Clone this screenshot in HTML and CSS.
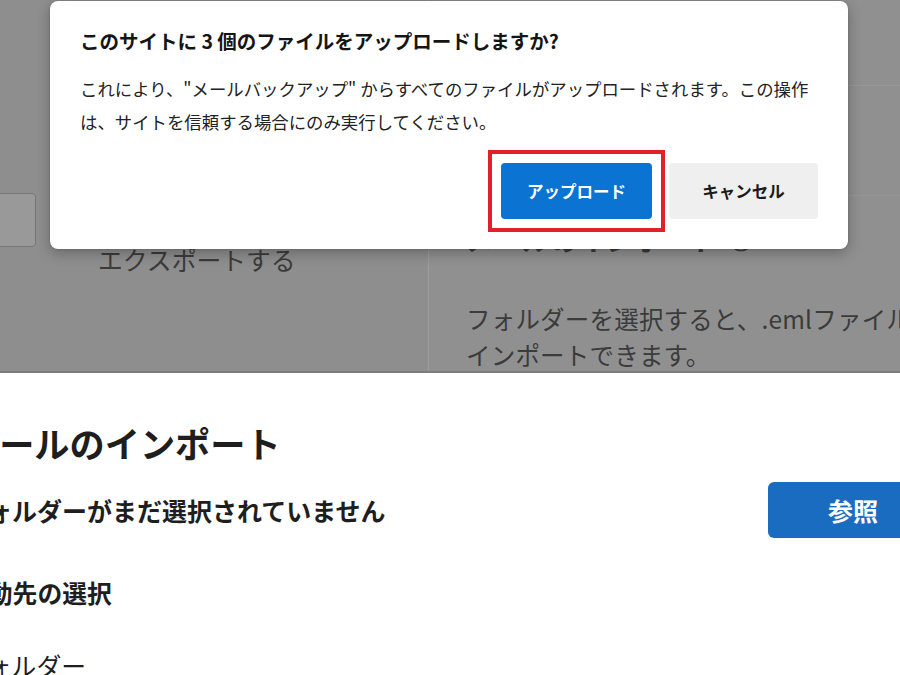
FILE: index.html
```html
<!DOCTYPE html>
<html lang="ja">
<head>
<meta charset="utf-8">
<title>アップロードの確認</title>
<link rel="stylesheet" href="styles.css">
</head>
<body>
<div class="screen">
  <section class="dim">
    <div class="bg-layout">
      <div class="bg-left">
        <div class="bg-input"></div>
        <div class="bg-export">エクスポートする</div>
      </div>
      <div class="bg-right">
        <div class="bg-row r1"></div>
        <div class="bg-row r2"></div>
        <div class="bg-heading">
          <span>メールのインポート</span>
          <svg class="info" width="26" height="26" viewBox="0 0 26 26"><circle cx="13" cy="13" r="11.5" fill="none" stroke="#3b3b3b" stroke-width="1.6"/><path d="M13 11v7" stroke="#3b3b3b" stroke-width="1.8"/><circle cx="13" cy="7.8" r="1.2" fill="#3b3b3b"/></svg>
        </div>
        <p class="bg-text">フォルダーを選択すると、.emlファイルを<br>インポートできます。</p>
      </div>
    </div>

    <div class="dialog" role="dialog">
      <h2 class="dialog-title">このサイトに 3 個のファイルをアップロードしますか?</h2>
      <p class="dialog-msg">これにより、"メールバックアップ" からすべてのファイルがアップロードされます。この操作<br>は、サイトを信頼する場合にのみ実行してください。</p>
      <div class="actions">
        <span class="highlight"><button class="btn btn-primary">アップロード</button></span>
        <button class="btn btn-secondary">キャンセル</button>
      </div>
    </div>
  </section>

  <section class="import">
    <div class="import-content">
      <h1 class="import-title">メールのインポート</h1>
      <div class="import-row">
        <p class="status">フォルダーがまだ選択されていません</p>
        <button class="browse">参照</button>
      </div>
      <h3 class="dest-title">移動先の選択</h3>
      <div class="folder-label">フォルダー</div>
    </div>
  </section>
</div>
</body>
</html>
```

FILE: styles.css
```css
* { box-sizing: border-box; }

html, body {
  margin: 0;
  padding: 0;
}

body {
  width: 900px;
  height: 675px;
  overflow: hidden;
  font-family: "Noto Sans CJK JP", "Noto Sans", sans-serif;
  background: #ffffff;
}

.screen {
  width: 900px;
  height: 675px;
  overflow: hidden;
}

/* ---------- dimmed page behind dialog ---------- */
.dim {
  position: relative;
  height: 373px;
  background: #8e8e8e;
  border-bottom: 2px solid #7c7c7c;
  overflow: hidden;
}

.bg-layout {
  display: grid;
  grid-template-columns: 428px 1fr;
  height: 100%;
}

.bg-left {
  padding-top: 193px;
}

.bg-input {
  margin-left: -100px;
  width: 136px;
  height: 54px;
  background: #999999;
  border: 1px solid #767676;
  border-radius: 4px;
}

.bg-export {
  margin-left: 98px;
  margin-top: -3px;
  font-size: 24.8px;
  line-height: 30px;
  color: #3b3b3b;
}

.bg-right {
  background: #909090;
  border-left: 1px solid #9c9c9c;
  padding-left: 37px;
}

.bg-row {
  margin-left: -37px;
  border-bottom: 1px solid #979797;
}

.bg-row.r1 { height: 86px; }
.bg-row.r2 { height: 110px; }

.bg-heading {
  display: flex;
  align-items: center;
  gap: 10px;
  margin-top: 25px;
  font-size: 28px;
  font-weight: 700;
  line-height: 36px;
  color: #3b3b3b;
}

.bg-text {
  margin: 44px 0 0;
  font-size: 24.5px;
  line-height: 36px;
  letter-spacing: 0.2px;
  color: #3b3b3b;
  white-space: nowrap;
}

/* ---------- dialog ---------- */
.dialog {
  position: absolute;
  top: 1px;
  left: 50px;
  width: 798px;
  padding: 27px 30px 17px;
  background: #ffffff;
  border-radius: 8px;
  box-shadow: 0 4px 14px rgba(0, 0, 0, 0.28), 0 0 2px rgba(0, 0, 0, 0.2);
}

.dialog-title {
  margin: 0;
  font-size: 19.5px;
  font-weight: 700;
  line-height: 26px;
  color: #151515;
}

.dialog-msg {
  margin: 18px 0 0;
  font-size: 17.4px;
  line-height: 33px;
  color: #222222;
  white-space: nowrap;
}

.actions {
  margin-top: 12px;
  display: flex;
  justify-content: flex-end;
  align-items: center;
  gap: 4px;
}

.highlight {
  display: flex;
  padding: 9px;
  border: 4px solid #e2202b;
}

.btn {
  height: 56px;
  border: none;
  border-radius: 4px;
  font-family: inherit;
  font-size: 16.5px;
  font-weight: 700;
  padding: 0;
}

.btn-primary {
  width: 151px;
  background: #0b73d2;
  color: #ffffff;
}

.btn-secondary {
  width: 149px;
  background: #efefef;
  color: #1b1b1b;
}

/* ---------- import section ---------- */
.import {
  height: 302px;
  background: #ffffff;
  overflow: hidden;
}

.import-content {
  margin-left: -38px;
  width: 976px;
  padding-top: 48px;
  color: #1e1e1e;
}

.import-title {
  margin: 0;
  padding-left: 2px;
  font-size: 35.2px;
  font-weight: 700;
  line-height: 44px;
}

.import-row {
  margin-top: 17px;
  height: 56px;
  display: flex;
  align-items: center;
  justify-content: space-between;
}

.status {
  margin: 0;
  font-size: 25px;
  font-weight: 700;
  line-height: 34px;
}

.browse {
  width: 170px;
  height: 56px;
  border: none;
  border-radius: 6px;
  background: #1a6cc1;
  color: #ffffff;
  font-family: inherit;
  font-size: 25px;
  font-weight: 700;
  padding: 0;
}

.dest-title {
  margin: 37px 0 0;
  padding-left: 1px;
  font-size: 24.8px;
  font-weight: 700;
  line-height: 34px;
}

.folder-label {
  margin-top: 39px;
  font-size: 24.8px;
  line-height: 34px;
}
```
